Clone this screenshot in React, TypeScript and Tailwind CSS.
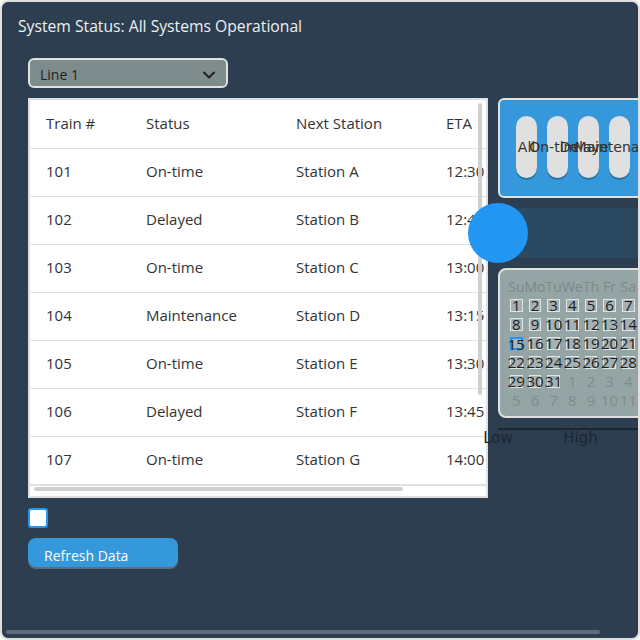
import React from "react";

const rows = [
  ["101", "On-time", "Station A", "12:30"],
  ["102", "Delayed", "Station B", "12:45"],
  ["103", "On-time", "Station C", "13:00"],
  ["104", "Maintenance", "Station D", "13:15"],
  ["105", "On-time", "Station E", "13:30"],
  ["106", "Delayed", "Station F", "13:45"],
  ["107", "On-time", "Station G", "14:00"],
  ["108", "Delayed", "Station H", "14:15"],
  ["109", "On-time", "Station I", "14:30"],
];

const heads = ["Su", "Mo", "Tu", "We", "Th", "Fr", "Sa"];

export default function App() {
  const days: { n: number; cur: boolean }[] = [];
  for (let i = 1; i <= 31; i++) days.push({ n: i, cur: true });
  for (let i = 1; i <= 11; i++) days.push({ n: i, cur: false });

  return (
    <div className="relative w-[640px] h-[640px] border-2 border-[#e0e0e0] rounded-lg bg-[#2c3e50] overflow-hidden px-4 pt-4 font-['Open_Sans',sans-serif]">
      <div className="h-5 leading-4 text-[15.7px] text-[#ecf0f1] whitespace-nowrap">
        System Status: All Systems Operational
      </div>
      <div className="p-[10px] mt-[10px] flex flex-col gap-[10px]">
        <div className="w-[200px] h-[30px] rounded-md border-2 border-[#dde2e2] bg-[#7f8c8d] flex items-center justify-between pl-[10px] pr-[11px] text-[14px] text-[#222]">
          <span className="pt-[3px]">Line 1</span>
          <svg width="12" height="8" viewBox="0 0 12 8" className="mt-[3px]">
            <path d="M1 1.5l5 5 5-5" fill="none" stroke="#222" strokeWidth="2" strokeLinecap="round" strokeLinejoin="round" />
          </svg>
        </div>
        <div className="flex gap-[10px] items-start">
          {/* left column */}
          <div className="w-[460px] shrink-0 flex flex-col gap-[10px]">
            <div className="relative h-[400px] border-2 border-[#e0e0e0] bg-white overflow-hidden">
              <table className="w-[530px] table-fixed border-collapse text-[15px] text-[#333]">
                <colgroup>
                  <col className="w-[100px]" />
                  <col className="w-[150px]" />
                  <col className="w-[150px]" />
                  <col className="w-[130px]" />
                </colgroup>
                <thead>
                  <tr className="h-[48px] border-b border-[#e0e0e0]">
                    {["Train #", "Status", "Next Station", "ETA"].map((h) => (
                      <th key={h} className="px-4 pb-[2px] text-left font-normal whitespace-nowrap">
                        {h}
                      </th>
                    ))}
                  </tr>
                </thead>
                <tbody>
                  {rows.map((r) => (
                    <tr key={r[0]} className="h-[48px] border-b border-[#e0e0e0]">
                      {r.map((c, i) => (
                        <td key={i} className="px-4 pb-[2px] whitespace-nowrap">
                          {c}
                        </td>
                      ))}
                    </tr>
                  ))}
                </tbody>
              </table>
              {/* scrollbar thumbs */}
              <div className="absolute left-[448px] top-[3px] w-[4px] h-[292px] rounded-full bg-[#d0d0d0]" />
              <div className="absolute left-0 right-0 bottom-[10px] h-px bg-[#e0e0e0]" />
              <div className="absolute left-0 right-0 bottom-0 h-[10px] bg-white" />
              <div className="absolute left-[4px] bottom-[5px] w-[369px] h-[4px] rounded-full bg-[#d0d0d0]" />
            </div>
            <input
              type="checkbox"
              className="appearance-none w-5 h-5 bg-white border-2 border-[#2196f3] rounded-[3px] block"
            />
            <button className="w-[150px] h-[29px] rounded-lg bg-[#3498db] text-white text-[14px] text-left pl-4 pt-[6px] leading-[20px] shadow-[0_2px_0_#5d6d7e]">
              Refresh Data
            </button>
          </div>
          {/* right column */}
          <div className="w-[165px] shrink-0 flex flex-col gap-[10px]">
            <div className="h-[100px] rounded-md border-2 border-[#e0e0e0] bg-[#3498db] pt-4 px-4 flex gap-[10px]">
              {["All", "On-time", "Delayed", "Maintenance"].map((t) => (
                <div
                  key={t}
                  className="w-[21px] h-[62px] shrink-0 rounded-full bg-[#e0e0e0] shadow-[0_2px_0_rgba(0,0,0,0.25)] flex items-center justify-center whitespace-nowrap text-[14px] text-[#333] font-['DejaVu_Sans',sans-serif]"
                >
                  {t}
                </div>
              ))}
            </div>
            <div className="h-[50px] rounded-full bg-[#2b4a62] flex items-center">
              <div className="relative z-10 w-[60px] h-[60px] rounded-full bg-[#2196f3] -ml-[30px] shrink-0" />
            </div>
            <div className="h-[150px] rounded-lg border-2 border-[#e0e0e0] bg-[#95a5a6] pt-[10px] pl-[10px]">
              <div className="grid grid-cols-[repeat(7,12.67px)] gap-[6px] text-[14px]">
                {heads.map((h) => (
                  <div key={h} className="h-[13px] leading-[13px] flex justify-center whitespace-nowrap text-[#7b898a]">
                    {h}
                  </div>
                ))}
                {days.map((d, i) =>
                  d.cur ? (
                    <div
                      key={i}
                      className={
                        d.n === 15
                          ? "h-[13px] leading-[13px] flex justify-center whitespace-nowrap text-[15px] font-medium text-[#1c1c1c] border-2 border-[#2196f3] bg-[#a9b5b6]"
                          : "h-[13px] leading-[13px] flex justify-center whitespace-nowrap text-[15px] font-medium text-[#1c1c1c] border border-[#dfe4e4] bg-[#a4b0b1]"
                      }
                    >
                      <span className="leading-[11px]">{d.n}</span>
                    </div>
                  ) : (
                    <div key={i} className="h-[13px] leading-[13px] flex justify-center whitespace-nowrap text-[15px] text-[#7f8c8d]">
                      {d.n}
                    </div>
                  )
                )}
              </div>
            </div>
            <div className="border-t-2 border-[#1b2631] grid grid-cols-2 text-[15px] text-[#1b2631] font-['DejaVu_Sans',sans-serif] leading-[16px]">
              <span className="justify-self-start -translate-x-1/2">Low</span>
              <span className="justify-self-start -translate-x-1/2">High</span>
            </div>
          </div>
        </div>
      </div>
      {/* page horizontal scrollbar thumb */}
      <div className="absolute left-[4px] bottom-[4px] w-[594px] h-[4px] rounded-full bg-[#5d6d7e]" />
    </div>
  );
}
